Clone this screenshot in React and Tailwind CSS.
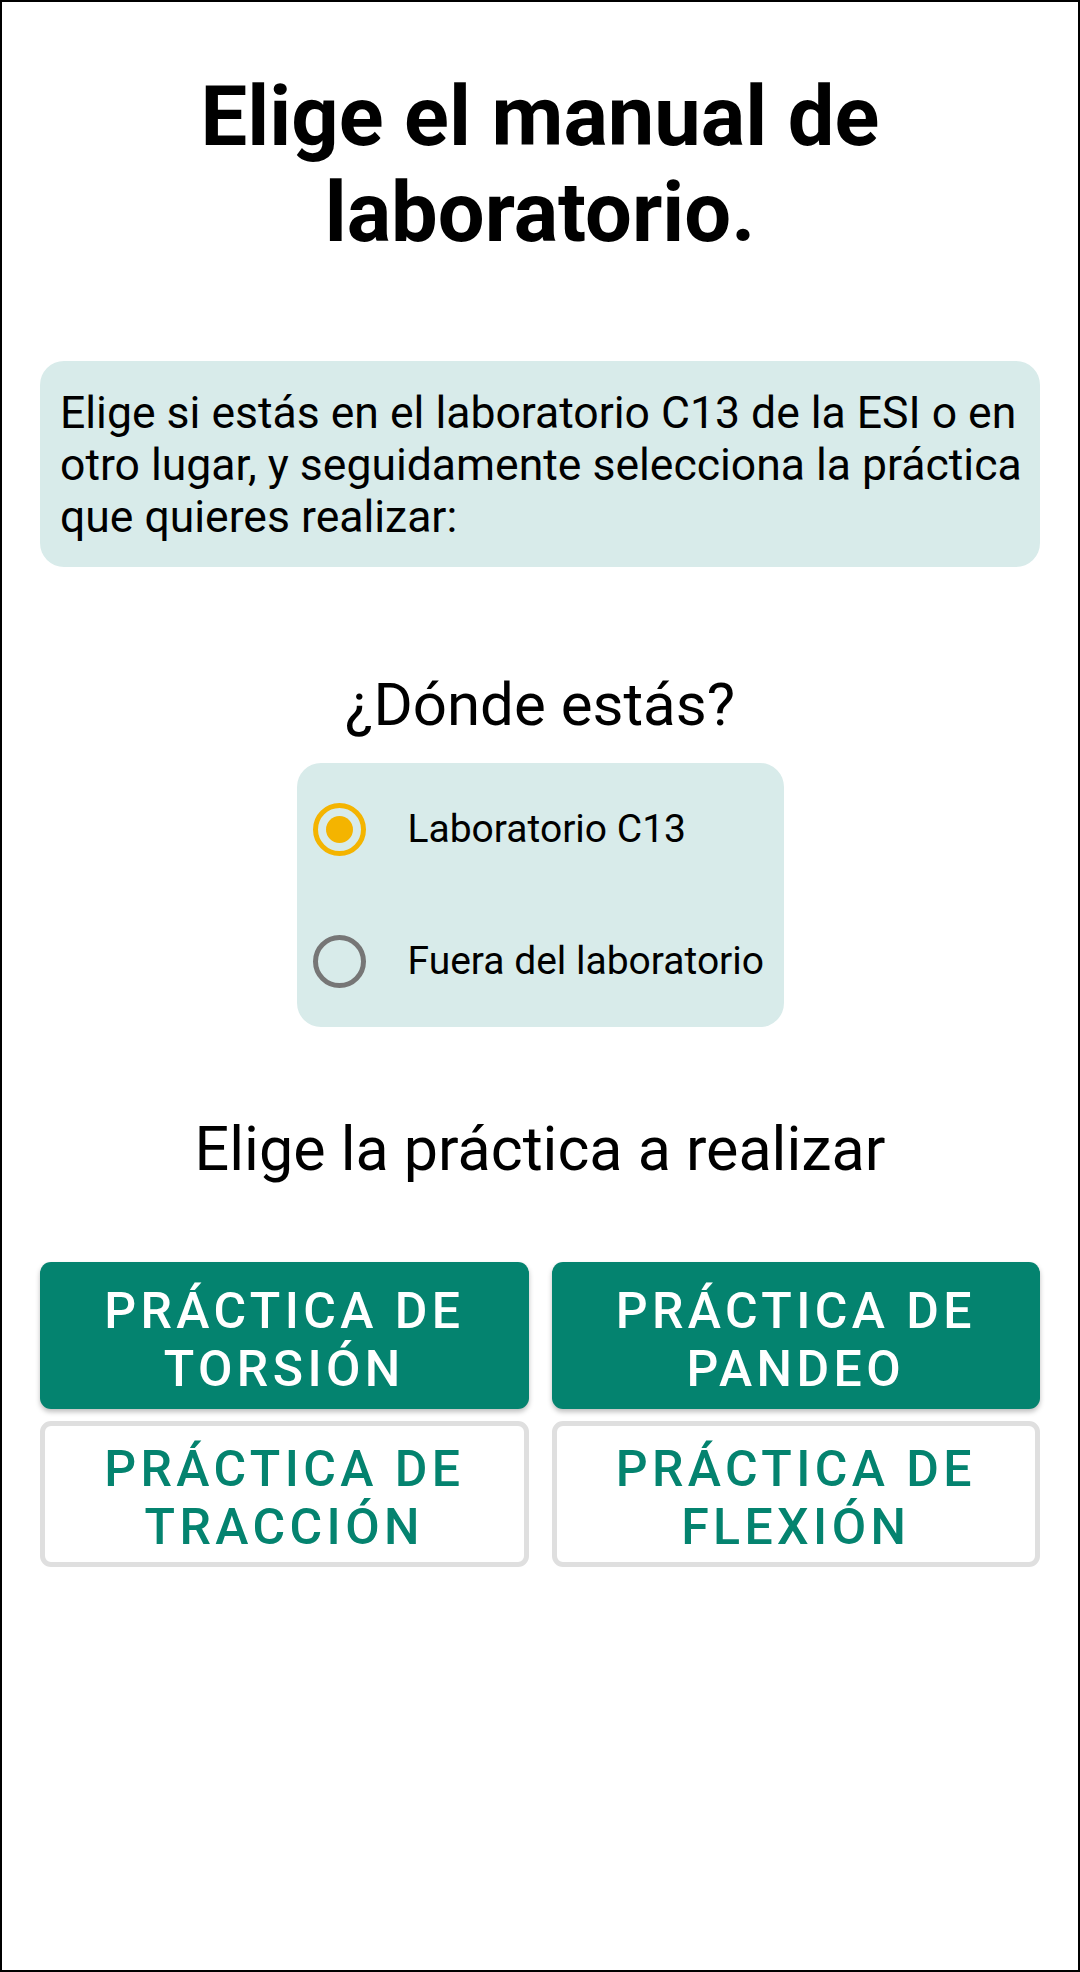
import { useState } from 'react';

const practicas = [
  { id: 'torsion', label: 'PRÁCTICA DE TORSIÓN', filled: true },
  { id: 'pandeo', label: 'PRÁCTICA DE PANDEO', filled: true },
  { id: 'traccion', label: 'PRÁCTICA DE TRACCIÓN', filled: false },
  { id: 'flexion', label: 'PRÁCTICA DE FLEXIÓN', filled: false },
];

function Radio({ checked, label, onClick }) {
  return (
    <button type="button" onClick={onClick} className="flex h-[132px] w-full items-center pl-[16px] text-left">
      <span
        className={
          checked
            ? 'flex h-[53px] w-[53px] items-center justify-center rounded-full border-[5px] border-[#f4b400]'
            : 'flex h-[53px] w-[53px] items-center justify-center rounded-full border-[5px] border-[#767676]'
        }
      >
        {checked && <span className="h-[27px] w-[27px] rounded-full bg-[#f4b400]" />}
      </span>
      <span className="ml-[42px] text-[39px] leading-[46px] text-black">{label}</span>
    </button>
  );
}

export default function App() {
  const [lugar, setLugar] = useState('lab');

  return (
    <div className="h-[1972px] w-[1080px] border-2 border-black bg-white font-['Roboto',sans-serif]">
      <div className="px-[38px] pt-[67px]">
        <h1 className="text-center text-[83px] font-bold leading-[96px] text-black">
          Elige el manual de laboratorio.
        </h1>

        <div className="mt-[100px] rounded-[24px] bg-[#d8ebea] pb-[24px] pl-[20px] pr-[8px] pt-[26px]">
          <p className="text-[44.5px] leading-[52px] text-black">
            Elige si estás en el laboratorio C13 de la ESI o en otro lugar, y seguidamente selecciona la práctica que quieres realizar:
          </p>
        </div>

        <h2 className="mt-[103px] text-center text-[60px] leading-[70px] text-black">¿Dónde estás?</h2>

        <div className="mx-auto mt-[23px] w-[487px] rounded-[24px] bg-[#d8ebea]">
          <Radio checked={lugar === 'lab'} label="Laboratorio C13" onClick={() => setLugar('lab')} />
          <Radio checked={lugar === 'fuera'} label="Fuera del laboratorio" onClick={() => setLugar('fuera')} />
        </div>

        <h2 className="mt-[86px] text-center text-[61px] leading-[72px] text-black">Elige la práctica a realizar</h2>

        <div className="mt-[77px] grid grid-cols-2 gap-x-[23px] gap-y-[12px]">
          {practicas.map((p) => (
            <button
              key={p.id}
              type="button"
              className={
                p.filled
                  ? 'flex h-[147px] items-center justify-center rounded-[11px] bg-[#04836f] px-6 pt-[8px] text-center text-[50px] font-medium leading-[58px] tracking-[4.4px] text-white shadow-[0_3px_5px_rgba(0,0,0,0.25)]'
                  : 'flex h-[146px] items-center justify-center rounded-[11px] border-[5px] border-[#dfdfdf] bg-white px-6 pt-[8px] text-center text-[50px] font-medium leading-[58px] tracking-[4.4px] text-[#04836f]'
              }
            >
              {p.label}
            </button>
          ))}
        </div>
      </div>
    </div>
  );
}
